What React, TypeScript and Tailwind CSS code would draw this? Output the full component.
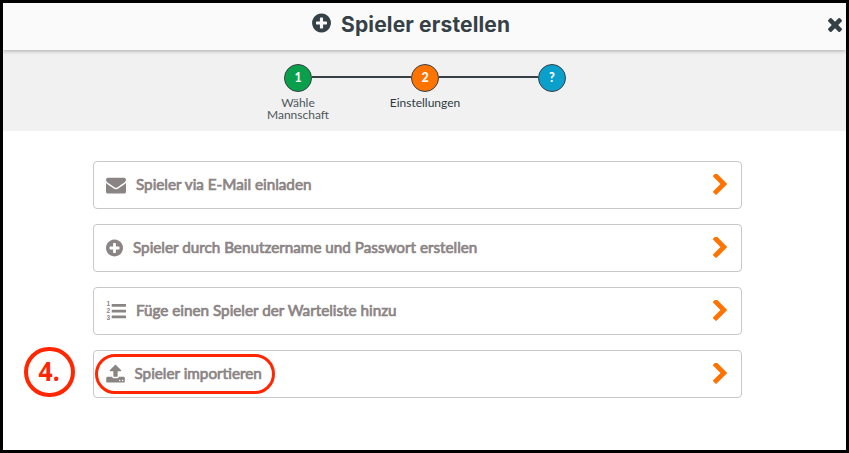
import React from 'react';

interface IconProps {
  className?: string;
}

function PlusCircleIcon({ className }: IconProps) {
  return (
    <svg viewBox="128 0 1536 1792" className={className} fill="currentColor">
      <path d="M1344 960v-128q0-26-19-45t-45-19h-256v-256q0-26-19-45t-45-19h-128q-26 0-45 19t-19 45v256h-256q-26 0-45 19t-19 45v128q0 26 19 45t45 19h256v256q0 26 19 45t45 19h128q26 0 45-19t19-45v-256h256q26 0 45-19t19-45zm320-64q0 209-103 385.5t-279.5 279.5-385.5 103-385.5-103-279.5-279.5-103-385.5 103-385.5 279.5-279.5 385.5-103 385.5 103 279.5 279.5 103 385.5z" />
    </svg>
  );
}

function CloseIcon({ className }: IconProps) {
  return (
    <svg viewBox="302 366 1188 1188" className={className} fill="currentColor">
      <path d="M1490 1322q0 40-28 68l-136 136q-28 28-68 28t-68-28l-294-294-294 294q-28 28-68 28t-68-28l-136-136q-28-28-28-68t28-68l294-294-294-294q-28-28-28-68t28-68l136-136q28-28 68-28t68 28l294 294 294-294q28-28 68-28t68 28l136 136q28 28 28 68t-28 68l-294 294 294 294q28 28 28 68z" />
    </svg>
  );
}

function EnvelopeIcon({ className }: IconProps) {
  return (
    <svg viewBox="0 0 1792 1792" className={className} fill="currentColor">
      <path d="M1792 710v794q0 66-47 113t-113 47h-1472q-66 0-113-47t-47-113v-794q44 49 101 87 362 246 497 345 57 42 92.5 65.5t94.5 48 110 24.5h2q51 0 110-24.5t94.5-48 92.5-65.5q170-123 498-345 57-39 100-87zm0-294q0 79-49 151t-122 123q-376 261-468 325-10 7-42.5 31t-54 38.5-52 32.5-57.5 27-50 9h-2q-23 0-50-9t-57.5-27-52-32.5-54-38.5-42.5-31q-91-64-262-182.5t-205-142.5q-62-42-117-115.5t-55-136.5q0-78 41.5-130t118.5-52h1472q65 0 112.5 47t47.5 113z" />
    </svg>
  );
}

function ListIcon({ className }: IconProps) {
  return (
    <svg viewBox="0 0 20 20" className={className} fill="currentColor">
      <rect x="5.7" y="3" width="14.3" height="2.7" rx="0.3" />
      <rect x="5.7" y="8.8" width="14.3" height="2.7" rx="0.3" />
      <rect x="5.7" y="14.6" width="14.3" height="2.7" rx="0.3" />
      <g className="font-['Liberation_Sans',sans-serif] text-[6.5px] font-bold [-webkit-text-stroke:0.3px_#8b8484]">
        <text x="0.5" y="5.4">1</text>
        <text x="0.5" y="12.2">2</text>
        <text x="0.5" y="19">3</text>
      </g>
    </svg>
  );
}

function UploadIcon({ className }: IconProps) {
  return (
    <svg viewBox="64 0 1664 1792" className={className} fill="currentColor">
      <path d="M1344 1472q0-26-19-45t-45-19-45 19-19 45 19 45 45 19 45-19 19-45zm256 0q0-26-19-45t-45-19-45 19-19 45 19 45 45 19 45-19 19-45zm128-224v320q0 40-28 68t-68 28h-1472q-40 0-68-28t-28-68v-320q0-40 28-68t68-28h427q21 56 70.5 92t110.5 36h256q61 0 110.5-36t70.5-92h427q40 0 68 28t28 68zm-325-648q-17 40-59 40h-256v448q0 26-19 45t-45 19h-256q-26 0-45-19t-19-45v-448h-256q-42 0-59-40-17-39 14-69l448-448q18-19 45-19t45 19l448 448q31 30 14 69z" />
    </svg>
  );
}

function ChevronIcon({ className }: IconProps) {
  return (
    <svg viewBox="346 102 1036 1536" className={className} fill="currentColor">
      <path d="M1363 877l-742 742q-19 19-45 19t-45-19l-166-166q-19-19-19-45t19-45l531-531-531-531q-19-19-19-45t19-45l166-166q19-19 45-19t45 19l742 742q19 19 19 45t-19 45z" />
    </svg>
  );
}

const steps = [
  { id: '1', label: 'Wähle Mannschaft', color: 'bg-[#0a9f4b] font-bold', text: 'text-[#4f575b]' },
  { id: '2', label: 'Einstellungen', color: 'bg-[#ff7300] font-black', text: 'text-[#2f3a40]' },
  { id: '?', label: '', color: 'bg-[#0b9fcc] font-black', text: '' },
];

const options = [
  { label: 'Spieler via E-Mail einladen', icon: EnvelopeIcon, size: 'w-5 mr-[10px]' },
  { label: 'Spieler durch Benutzername und Passwort erstellen', icon: PlusCircleIcon, size: 'w-[17px] mr-[10px]' },
  { label: 'Füge einen Spieler der Warteliste hinzu', icon: ListIcon, size: 'w-5 mr-[10px]' },
  { label: 'Spieler importieren', icon: UploadIcon, size: 'w-[19px] mr-[9.5px]' },
];

export default function App() {
  return (
    <div className="relative flex h-[453px] w-[849px] flex-col border-[3px] border-black bg-white font-['Lato',sans-serif]">
      {/* Title bar */}
      <header className="z-10 flex h-[47px] shrink-0 items-center bg-[#fafafa] pl-[309px] pr-1 text-[#364147] shadow-[0_1px_4px_rgba(0,0,0,0.3)]">
        <PlusCircleIcon className="mb-2 h-[22px] w-[19px]" />
        <h1 className="mb-[3px] ml-[10px] whitespace-nowrap font-['Inter',sans-serif] text-[21px] font-bold leading-6 tracking-[0.15px]">
          Spieler erstellen
        </h1>
        <button className="mb-[3px] ml-auto">
          <CloseIcon className="h-[14px] w-[14px]" />
        </button>
      </header>

      {/* Steps */}
      <div className="flex h-[81px] shrink-0 bg-[#f1f1f1] pl-[231.5px] pt-[14px]">
        {steps.map((step, index) => (
          <div key={step.id} className="flex w-[127px] flex-col items-center">
            <div className="flex w-full items-center">
              <div className={`mb-[2px] h-[2px] flex-1 ${index > 0 ? 'bg-[#364147]' : ''}`} />
              <div className={`flex h-7 w-7 items-center justify-center rounded-full border border-[#364147] text-[12.5px] leading-4 text-white ${step.color}`}>
                {step.id}
              </div>
              <div className={`mb-[2px] h-[2px] flex-1 ${index < steps.length - 1 ? 'bg-[#364147]' : ''}`} />
            </div>
            <p className={`mt-[5px] w-[80px] text-center text-[12px] leading-3 ${step.text}`}>{step.label}</p>
          </div>
        ))}
      </div>

      {/* Options */}
      <div className="flex flex-col gap-[15px] pl-[90px] pr-[104px] pt-[30px]">
        {options.map((option) => {
          const Icon = option.icon;
          return (
            <button
              key={option.label}
              className="flex h-12 items-center rounded-[4px] border border-[#c8c8c8] bg-white pb-[2px] pl-3 pr-[14px] text-left text-[#8b8484]"
            >
              <Icon className={`mt-px h-5 shrink-0 ${option.size}`} />
              <span className="whitespace-nowrap text-[15.25px] leading-5 [-webkit-text-stroke:0.7px_#8b8484]">{option.label}</span>
              <ChevronIcon className="ml-auto h-[21px] w-[14px] text-[#ff7300]" />
            </button>
          );
        })}
      </div>

      {/* Markers */}
      <div className="absolute left-[92px] top-[351px] h-10 w-[180px] rounded-[20px] border-[3px] border-[#ff2600]" />
      <div className="absolute left-[21px] top-[344px] flex h-[50px] w-[51px] items-center justify-center rounded-full border-4 border-[#ff2600] pb-px font-['Noto_Sans',sans-serif] text-[26px] font-bold text-[#ff2600]">
        <span className="scale-x-95">4.</span>
      </div>
    </div>
  );
}
